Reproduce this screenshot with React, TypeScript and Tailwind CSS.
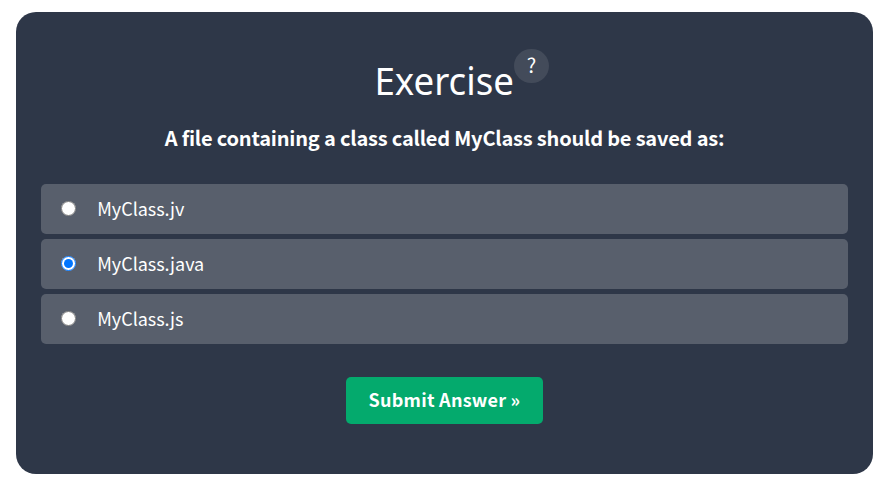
import React, { useState } from "react";

const answers = ["MyClass.jv", "MyClass.java", "MyClass.js"];

export default function App() {
  const [selected, setSelected] = useState(1);
  return (
    <main className="h-[482px] w-[891px] bg-white pt-3 pl-4 font-['Noto_Sans_CJK_SC','Noto_Sans',sans-serif] text-white">
      <section className="flex h-[462px] w-[857px] flex-col items-center rounded-[20px] bg-[#2e3748] px-[25px] pt-10">
        <h1 className="relative flex h-[60px] w-[139px] items-center justify-center font-['Noto_Sans',sans-serif] text-[39px] leading-[58px]">
          <span className="-mt-1 block origin-center scale-x-[0.94]">Exercise</span>
          <span className="absolute -top-[3px] left-full flex h-[34px] w-[35px] items-center justify-center rounded-full bg-[#434b5a] pb-[3px] font-['Noto_Sans_CJK_SC',sans-serif] text-[20px]">?</span>
        </h1>
        <h2 className="mt-[11px] text-[20px] leading-[30px] font-bold tracking-[-0.19px]">A file containing a class called MyClass should be saved as:</h2>
        <div className="mt-[31px] flex w-full flex-col gap-[5px]">
          {answers.map((answer, i) => (
            <label key={answer} className="flex h-[50px] items-center rounded-[5px] bg-[#585f6c] pl-5 text-[18px]">
              <input type="radio" name="answer" checked={selected === i} onChange={() => setSelected(i)} className="mr-[21.25px] mb-[2px] size-[15px]" />
              <span className="mb-0.5 tracking-[-0.03px]">{answer}</span>
            </label>
          ))}
        </div>
        <button className="mt-[33px] h-[47px] w-[197px] rounded-[5px] bg-[#04aa6d] pb-[3px] text-[18px] font-bold tracking-[0.25px]">Submit Answer »</button>
      </section>
    </main>
  );
}
